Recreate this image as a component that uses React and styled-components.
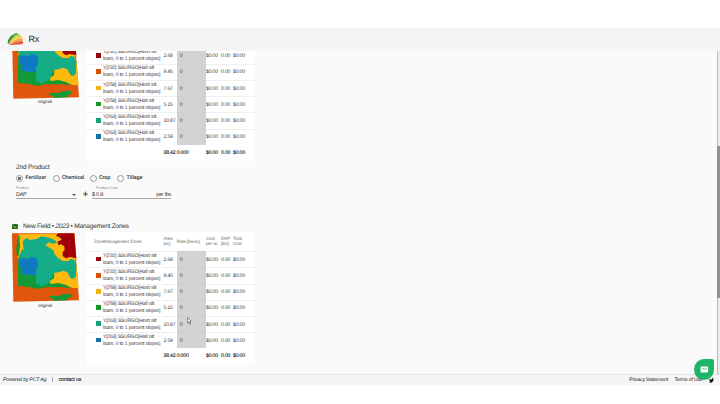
import styled, { createGlobalStyle } from "styled-components";

const zones = [
  { color: "#94060b", name: "Y[232] SSURGO[Hord silt", area: "2.68" },
  { color: "#d9500a", name: "Y[232] SSURGO[Hall silt", area: "9.45" },
  { color: "#f0b40c", name: "Y[258] SSURGO[Hord silt", area: "7.67" },
  { color: "#17962a", name: "Y[258] SSURGO[Hall silt", area: "5.15" },
  { color: "#16a37c", name: "Y[263] SSURGO[Hord silt", area: "10.87" },
  { color: "#0f73a5", name: "Y[263] SSURGO[Hall silt", area: "2.59" },
];

const productTypes = [
  { label: "Fertilizer", width: 36.5 },
  { label: "Chemical", width: 37 },
  { label: "Crop", width: 27.5 },
  { label: "Tillage", width: 30 },
];

const Logo = () => (
  <LogoSvg viewBox="0 0 51 36">
    <path d="M2 31C3 19 9 10 17 6C20 3 23 1 27 0C33 0 35 4 31 9L8 31Z" fill="#58a83c" />
    <path d="M2 31C3 19 9 10 17 6C20 8 16 15 6 32Z" fill="#388c36" />
    <path d="M7 27C14 15 26 4 34 3C40 4 40 9 36 12L10 32Z" fill="#a9cf4e" />
    <path d="M8 29C18 16 32 8 42 8C47 10 46 15 42 17L12 33Z" fill="#f6d143" />
    <path d="M8 31C20 21 37 15 46 17C50 20 47 24 43 25L12 34Z" fill="#f39b33" />
    <path d="M7 33C20 26 36 23 47 25C51 28 48 33 43 34L11 36Z" fill="#e5492d" />
    <path d="M8 29L31 8M9 31L38 12M9 32L43 18M9 33L44 26" stroke="#fbf5dc" strokeWidth="1" fill="none" />
  </LogoSvg>
);

const ZoneMap = () => (
  <MapSvg viewBox="36 40 204 207" preserveAspectRatio="none">
    <path d="M36 41L223 41L237 242L40 246Z" fill="#df560c" />
    <path d="M55 48L70 44L200 50L231 150L233 204L150 203L112 209L86 202L54 204Z" fill="#119a35" />
    <path d="M56 44L196 42L222 108L230 140L236 206L215 204L198 196L176 190L152 193L148 184L162 176L163 164L150 140L66 90L54 118L51 100L60 76Z" fill="#fdb90d" />
    <path d="M62 46L55 72L60 80L56 108L51 111L49 88L52 62Z" fill="#119a35" />
    <path d="M68 66L78 54L90 61L112 57L124 50L148 54L166 62L170 70L158 72L148 68L136 76L148 84L160 92L164 104L174 115L188 124L206 124L212 117L222 120L229 134L228 168L221 178L212 176L202 158L190 153L176 158L162 160L158 170L151 178L151 188L140 193L124 202L114 192L107 196L108 166L96 164L84 168L72 150L58 134L55 126L60 108L64 96L71 91Z" fill="#14ad88" />
    <path d="M56 122L68 114L84 118L96 112L110 116L115 128L113 144L107 154L109 165L96 168L88 162L82 168L66 160L60 160L65 148L59 140Z" fill="#1079c4" />
    <path d="M54 140L60 140L66 148L60 160L66 160L82 168L96 168L109 165L108 196L86 202L54 204Z" fill="#119a35" />
    <path d="M172 41L223 41L229 119L214 116L207 121L192 114L186 98L190 84L188 76L174 72L164 60L180 56Z" fill="#fdb90d" />
    <path d="M173 41L223 41L229 116L210 112L198 116L188 109L188 97L194 91L193 80L184 74L176 77L172 66L185 60L178 52L168 49Z" fill="#a10008" />
    <path d="M149 237L150 230L164 228L180 229L187 224L203 222L215 225L214 233L204 234L203 242L161 243L160 236Z" fill="#119a35" />
    <path d="M41 202L54 198L86 202L112 208L140 202L160 206L182 202L196 205L180 210L42 212Z" fill="#df560c" />
  </MapSvg>
);

const ZoneField = ({ scrolled }) => (
  <FieldBody $scrolled={scrolled}>
    <MapFigure>
      <ZoneMap />
      <figcaption>original</figcaption>
    </MapFigure>
    <ZoneCard>
      <HeadRow>
        {!scrolled && (
          <>
            <ZoneHead>ZoneManagement Zones</ZoneHead>
            <span>Area<br />[ac]</span>
            <span>Rate [lbs/ac]</span>
            <span>Cost<br />per ac</span>
            <span>DAP<br />[lbs]</span>
            <span>Total<br />Cost</span>
          </>
        )}
      </HeadRow>
      {zones.map((zone) => (
        <ZoneRow key={zone.name}>
          <Swatch $color={zone.color} />
          <ZoneName>
            {zone.name}
            <br />
            loam, 0 to 1 percent slopes]
          </ZoneName>
          <span>{zone.area}</span>
          <RateCell>0</RateCell>
          <span>$0.00</span>
          <span>0.00</span>
          <span>$0.00</span>
        </ZoneRow>
      ))}
      <TotalRow>
        <span />
        <span />
        <span>38.42</span>
        <span>0.000</span>
        <span>$0.00</span>
        <span>0.00</span>
        <span>$0.00</span>
      </TotalRow>
    </ZoneCard>
  </FieldBody>
);

const App = () => {
  return (
    <>
      <GlobalStyle />
      <Page>
        <Header>
          <Logo />
          <h1>Rx</h1>
        </Header>

        <Main>
          <Content>
            <ZoneField scrolled />

            <Product>
              <h2>2nd Product</h2>
              <RadioGroup>
                {productTypes.map((type, i) => (
                  <Radio key={type.label} $width={type.width}>
                    <RadioMark $checked={i === 0} />
                    {type.label}
                  </Radio>
                ))}
              </RadioGroup>
              <Inputs>
                <Field $width={60.5}>
                  <FieldLabel>Product</FieldLabel>
                  <FieldValue>
                    DAP
                    <Caret />
                  </FieldValue>
                </Field>
                <Plus>+</Plus>
                <Field $width={79}>
                  <FieldLabel $indent={4}>Product Cost</FieldLabel>
                  <FieldValue>
                    $ 0.8
                    <span>per lbs</span>
                  </FieldValue>
                </Field>
              </Inputs>
            </Product>

            <FieldTitle>
              <FieldLogo viewBox="0 0 18 16">
                <rect width="18" height="16" rx="4" fill="#2f8a2a" />
                <rect x="2" y="2" width="14" height="12" rx="2" fill="#174e1b" />
                <path d="M3 8L6 4L8 7L13 7L15 11L11 10L7 12L6 9Z" fill="#b9cb35" />
              </FieldLogo>
              New Field • <em>2023</em> • Management Zones
            </FieldTitle>
            <ZoneField />
          </Content>
          <Scrollbar>
            <Thumb />
          </Scrollbar>
        </Main>

        <Footer>
          <em>Powered by PCT Ag</em>
          <Divider>|</Divider>
          <b>contact us</b>
          <Legal>
            <span>Privacy Statement</span>
            <span>Terms of Use</span>
            <svg width="5" height="5" viewBox="0 0 24 22">
              <path
                d="M24 3l-3 3c0 9-6 16-14 16-3 0-5-1-7-2 3 0 5-1 7-2-2 0-4-2-4-4h2C2 13 1 11 1 9l2 1C1 7 1 5 2 2c3 3 6 5 10 5 0-4 2-7 5-7 2 0 3 1 4 2l3-1-2 3z"
                fill="#111"
              />
            </svg>
          </Legal>
        </Footer>

        <ChatButton>
          <svg width="9" height="7" viewBox="0 0 9 7">
            <rect x="0.5" y="0.5" width="7.6" height="6" rx="1" fill="#fff" />
            <path d="M1.8 2.2L4.3 3.4L6.8 2.2" stroke="#20b468" strokeWidth="0.7" fill="none" />
          </svg>
        </ChatButton>
        <Cursor viewBox="0 0 12 20">
          <path d="M1 1L1 16L4.5 13L7 19L9.5 18L7 12L11 12Z" fill="#fff" stroke="#333" strokeWidth="1.5" />
        </Cursor>
      </Page>
    </>
  );
};

const GlobalStyle = createGlobalStyle`
  * {
    box-sizing: border-box;
  }
  body {
    margin: 0;
    background: #fff;
    font-family: "Liberation Sans", Arial, sans-serif;
    color: #333;
    text-rendering: geometricPrecision;
  }
  h1, h2, figure {
    margin: 0;
    font-weight: 400;
  }
`;

const Page = styled.div`
  position: relative;
  display: flex;
  flex-direction: column;
  width: 720px;
  height: 404px;
  padding: 28px 0 19px;
  overflow: hidden;
`;

const Header = styled.header`
  display: flex;
  align-items: center;
  flex: 0 0 22.5px;
  padding-left: 7px;
  background: #f5f5f5;

  h1 {
    margin-left: 4.5px;
    font-size: 9px;
    letter-spacing: -0.3px;
    line-height: 10px;
    color: #222;
  }
`;

const LogoSvg = styled.svg`
  width: 17px;
  height: 12px;
`;

const Main = styled.main`
  display: flex;
  flex: 1;
  min-height: 0;
  background: #fafafa;
`;

const Content = styled.div`
  flex: 1;
  overflow: hidden;
`;

const Scrollbar = styled.div`
  width: 3px;
  padding-top: 95px;
  background: #ececec;
  border-left: 1px solid #bbb;
`;

const Thumb = styled.div`
  height: 152px;
  margin-left: -1px;
  background: #929292;
`;

const FieldBody = styled.section`
  display: flex;
  align-items: flex-start;
  margin-top: ${(props) => (props.$scrolled ? "-22.5px" : "0")};
  padding-left: 12px;
`;

const MapFigure = styled.figure`
  width: 68px;
  margin-right: 6px;
  padding-top: 1.5px;

  figcaption {
    margin-top: 0.8px;
    padding-right: 2px;
    font-size: 4.6px;
    letter-spacing: -0.1px;
    line-height: 5px;
    text-align: center;
  }
`;

const MapSvg = styled.svg`
  display: block;
  width: 68px;
  height: 69px;
`;

const ZoneCard = styled.div`
  width: 169px;
  height: 133px;
  background: #fff;
  font-size: 5.2px;
  letter-spacing: -0.21px;
  box-shadow: 0 0 1px rgba(0, 0, 0, 0.06);
`;

const Row = styled.div`
  display: grid;
  grid-template-columns: 17px 60.5px 13.2px 29.3px 15px 12px 1fr;
  align-items: center;
  white-space: nowrap;
`;

const HeadRow = styled(Row)`
  height: 19.7px;
  font-size: 4.6px;
  letter-spacing: -0.18px;
  line-height: 5.2px;
  color: #777;
`;

const ZoneHead = styled.span`
  grid-column: span 2;
  padding-left: 8px;
`;

const ZoneRow = styled(Row)`
  height: 16.2px;
  border-top: 1px solid #f0f0f0;
  color: #3a3a3a;
`;

const TotalRow = styled(Row)`
  height: 15.5px;
  color: #111;
  -webkit-text-stroke: 0.1px #111;
`;

const Swatch = styled.span`
  width: 4.6px;
  height: 4.6px;
  margin: 0 0 1.5px 10px;
  background: ${(props) => props.$color};
`;

const ZoneName = styled.span`
  line-height: 7px;
  font-size: 5px;
  letter-spacing: -0.19px;
  word-spacing: 0.2px;
`;

const RateCell = styled.span`
  display: flex;
  align-items: center;
  align-self: stretch;
  margin-top: -1px;
  padding-left: 3px;
  background: #d3d3d3;
  border-top: 1px solid #cecece;
`;

const Product = styled.section`
  height: 60px;
  padding: 3.4px 0 0 16px;

  h2 {
    font-size: 6.6px;
    letter-spacing: -0.2px;
    line-height: 8px;
  }
`;

const RadioGroup = styled.div`
  display: flex;
  margin-top: 1.8px;
`;

const Radio = styled.label`
  display: flex;
  align-items: center;
  width: ${(props) => props.$width}px;
  height: 8px;
  font-family: Roboto, sans-serif;
  font-size: 5.4px;
  letter-spacing: -0.08px;
  font-weight: 500;
  white-space: nowrap;
`;

const RadioMark = styled.i`
  flex: none;
  width: 7px;
  height: 7px;
  margin-right: 2.6px;
  border: 0.8px solid #999;
  border-radius: 50%;
  background: ${(props) =>
    props.$checked ? "radial-gradient(circle, #666 1.2px, transparent 2px)" : "none"};
`;

const Inputs = styled.div`
  display: flex;
  align-items: flex-end;
  margin-top: 4px;
`;

const Field = styled.div`
  width: ${(props) => props.$width}px;
`;

const FieldLabel = styled.div`
  padding-left: ${(props) => props.$indent || 0}px;
  font-size: 3.7px;
  line-height: 4px;
  color: #888;
`;

const FieldValue = styled.div`
  display: flex;
  align-items: center;
  justify-content: space-between;
  height: 9px;
  padding-top: 1.5px;
  border-bottom: 1px solid #aaa;
  font-size: 5.4px;
  letter-spacing: -0.2px;
`;

const Caret = styled.i`
  margin-right: 1px;
  border: 2px solid transparent;
  border-top-color: #555;
  border-bottom: 0;
`;

const Plus = styled.span`
  width: 17px;
  padding-left: 1px;
  margin-right: -1.5px;
  font-size: 9px;
  line-height: 9px;
  text-align: center;
  -webkit-text-stroke: 0.2px #333;
`;

const FieldTitle = styled.h2`
  display: flex;
  align-items: center;
  height: 10.5px;
  padding: 0 0 0 12px;
  font-size: 6.6px;
  letter-spacing: -0.25px;
  white-space: pre;
`;

const FieldLogo = styled.svg`
  width: 6px;
  height: 5.5px;
  margin: 0 5px 0 0;
`;

const Footer = styled.footer`
  display: flex;
  align-items: center;
  flex: 0 0 11px;
  padding: 0 6px 0 3px;
  background: #f5f5f5;
  border-top: 1px solid #e3e3e3;
  font-size: 5.1px;
  letter-spacing: -0.16px;
  color: #222;

  b {
    font-weight: 400;
    font-size: 5.4px;
    -webkit-text-stroke: 0.12px #222;
  }
`;

const Divider = styled.span`
  margin: 0 5.5px;
`;

const Legal = styled.div`
  display: flex;
  align-items: center;
  gap: 6.5px;
  margin-left: auto;
`;

const ChatButton = styled.div`
  position: absolute;
  top: 359px;
  left: 694px;
  display: flex;
  align-items: center;
  justify-content: center;
  width: 20px;
  height: 20.5px;
  border-radius: 50% 2px 50% 50%;
  background: #20b468;
`;

const Cursor = styled.svg`
  position: absolute;
  top: 317px;
  left: 187px;
  width: 4.5px;
  height: 7.5px;
`;

export default App;
